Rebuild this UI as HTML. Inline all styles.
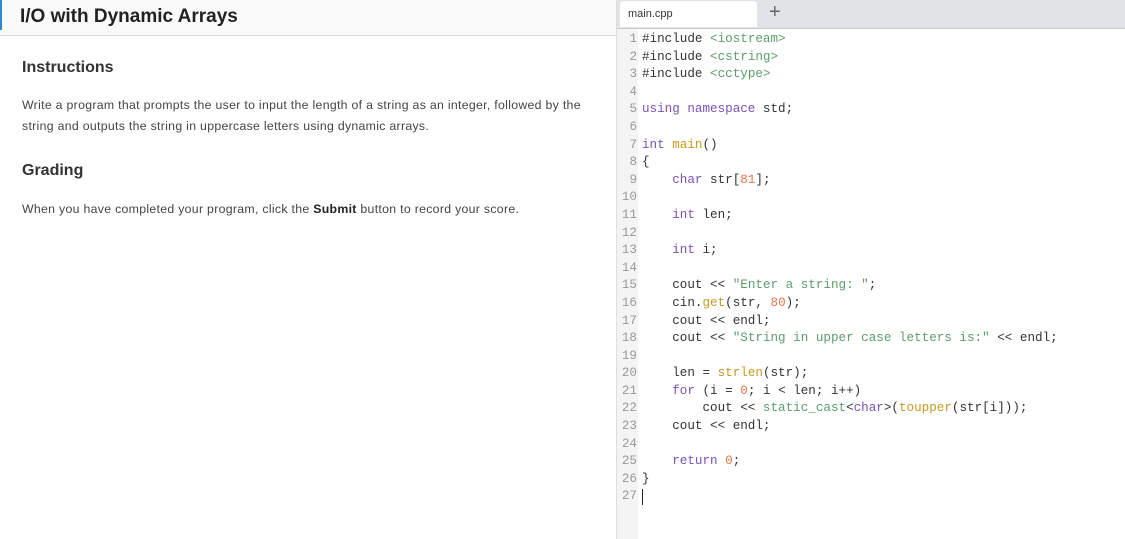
<!DOCTYPE html>
<html><head><style>
body{margin:0;width:1125px;height:539px;overflow:hidden;background:#fff;font-family:"Liberation Sans",sans-serif;position:relative}
.hdr{position:absolute;left:0;top:0;width:617px;height:35px;background:#fafafa;border-bottom:1px solid #d8d8d8}
.hdr .bar{position:absolute;left:0;top:0;width:2px;height:30px;background:#2a8ad8}
.hdr h1{position:absolute;left:20px;top:6px;margin:0;font-size:19px;font-weight:bold;color:#222}
.h2{position:absolute;left:22px;font-size:16px;font-weight:bold;color:#333}
.p{position:absolute;left:22px;font-size:12.3px;letter-spacing:0.3px;color:#444;line-height:21px;white-space:nowrap}
.vline{position:absolute;left:616px;top:0;width:1px;height:539px;background:#ddd}
.tabs{position:absolute;left:617px;top:0;width:508px;height:28px;background:#e1e3e6;border-bottom:1px solid #ccc}
.tab{position:absolute;left:3px;top:1px;width:137px;height:26px;background:#fff;border-radius:3px 3px 0 0;font-size:11px;color:#333;line-height:26px;padding-left:8px;box-sizing:border-box}
.plus{position:absolute;left:152px;top:1px;font-size:20px;color:#666;font-weight:300}
.gut{position:absolute;left:617px;top:29px;width:21px;height:510px;background:#f4f4f4}
pre{position:absolute;margin:0;top:31px;font-family:"Liberation Mono",monospace;font-size:12.6px;line-height:17.6px}
.ln{left:617px;width:20px;text-align:right;color:#999}
.code{left:642px;color:#333}
.k{color:#7a4fc0}.s{color:#5a9e6a}.f{color:#c99a1a}.n{color:#e8744a}
.cur{position:absolute;left:642px;top:489px;width:1px;height:16px;background:#222}
</style></head><body>
<div class="hdr"><div class="bar"></div><h1>I/O with Dynamic Arrays</h1></div>
<div class="h2" style="top:59px">Instructions</div>
<div class="p" style="top:95px">Write a program that prompts the user to input the length of a string as an integer, followed by the<br>string and outputs the string in uppercase letters using dynamic arrays.</div>
<div class="h2" style="top:162px">Grading</div>
<div class="p" style="top:199px">When you have completed your program, click the <b style="color:#222">Submit</b> button to record your score.</div>
<div class="vline"></div>
<div class="tabs"><div class="tab">main.cpp</div><div class="plus">+</div></div>
<div class="gut"></div>
<pre class="ln">1
2
3
4
5
6
7
8
9
10
11
12
13
14
15
16
17
18
19
20
21
22
23
24
25
26
27</pre>
<pre class="code">#include <span class="s">&lt;iostream&gt;</span>
#include <span class="s">&lt;cstring&gt;</span>
#include <span class="s">&lt;cctype&gt;</span>

<span class="k">using namespace</span> std;

<span class="k">int</span> <span class="f">main</span>()
{
    <span class="k">char</span> str[<span class="n">81</span>];

    <span class="k">int</span> len;

    <span class="k">int</span> i;

    cout &lt;&lt; <span class="s">"Enter a string: "</span>;
    cin.<span class="f">get</span>(str, <span class="n">80</span>);
    cout &lt;&lt; endl;
    cout &lt;&lt; <span class="s">"String in upper case letters is:"</span> &lt;&lt; endl;

    len = <span class="f">strlen</span>(str);
    <span class="k">for</span> (i = <span class="n">0</span>; i &lt; len; i++)
        cout &lt;&lt; <span class="s">static_cast</span>&lt;<span class="k">char</span>&gt;(<span class="f">toupper</span>(str[i]));
    cout &lt;&lt; endl;

    <span class="k">return</span> <span class="n">0</span>;
}
</pre>
<div class="cur"></div>
</body></html>
